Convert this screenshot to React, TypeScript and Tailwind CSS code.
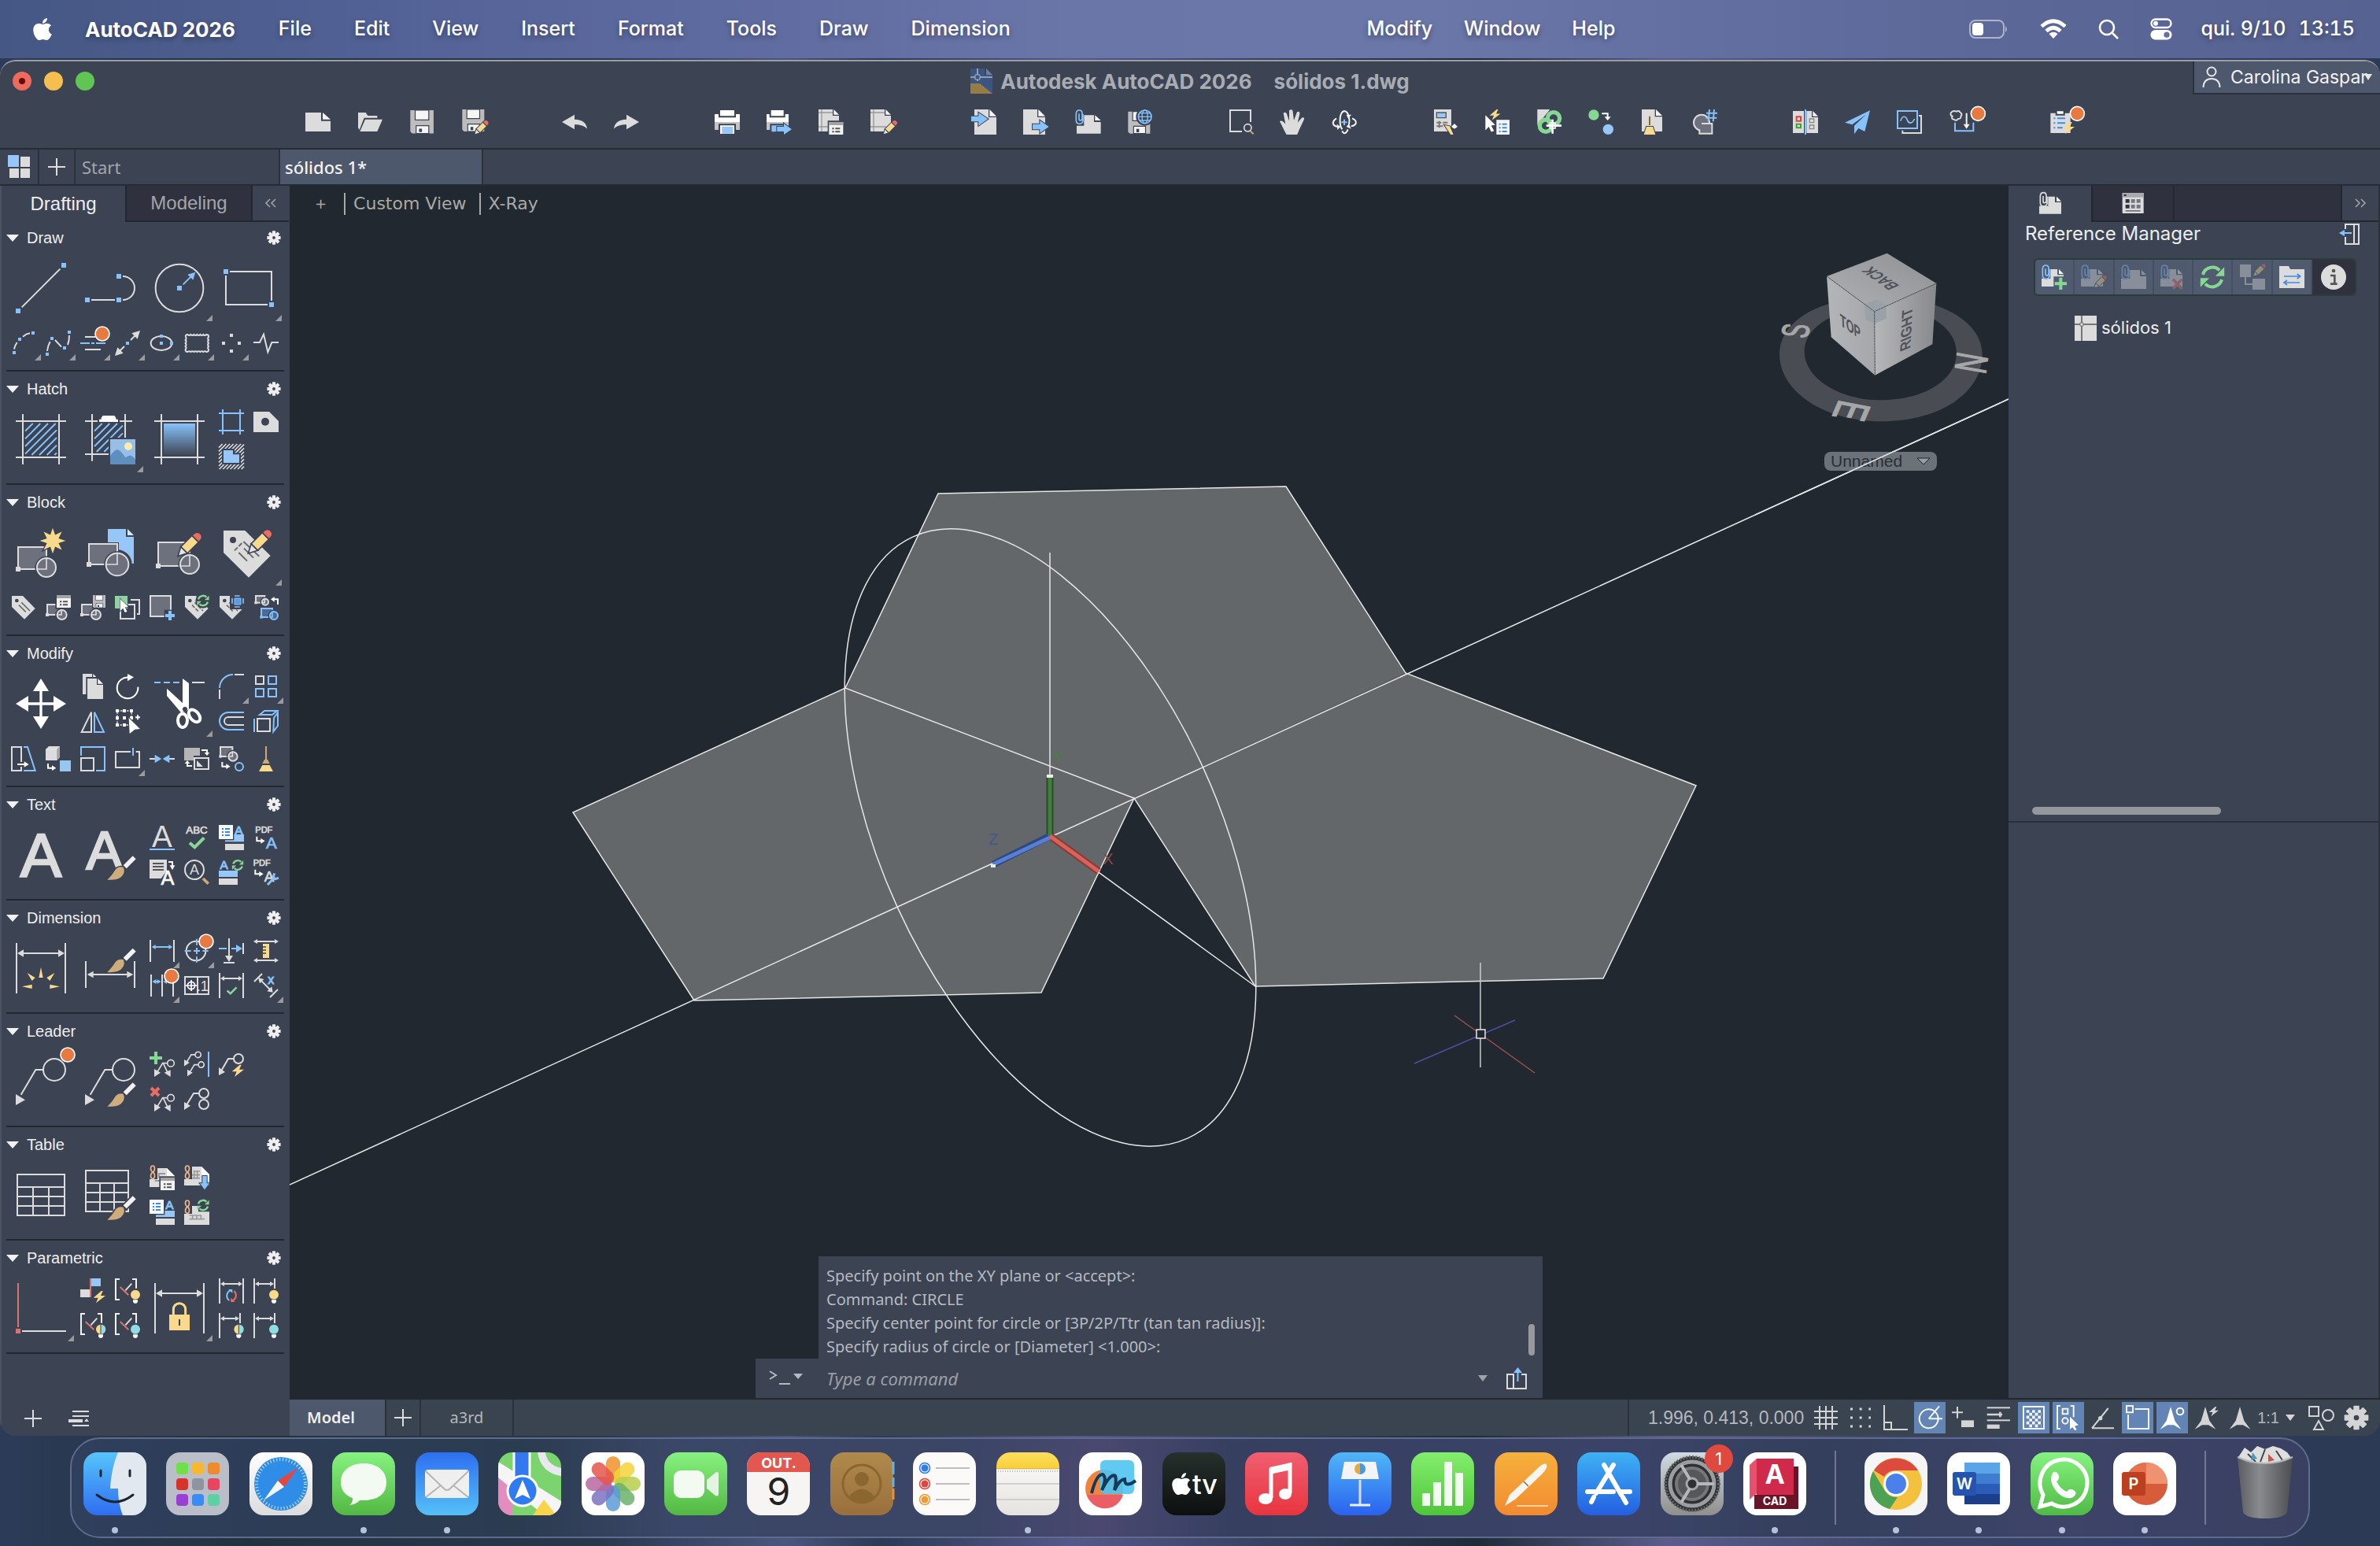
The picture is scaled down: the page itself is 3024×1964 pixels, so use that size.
import type { ReactNode } from "react";
import { FaApple } from "react-icons/fa";

const G = "#dcdcdc";
const B = "#86c2fb";
const BG = "#3c4352";
const Y = "#f9d98c";
const R = "#ea6c65";
const GR = "#86d694";
const F = "#6d717d";

/* ---------- shared drawing pieces (small icons use a 96 grid, large ones 192) ---------- */

const Small = ({ children }: { children?: ReactNode }) => (
  <svg viewBox="0 0 96 96" className="h-8 w-8 overflow-visible" fill="none" stroke={G} strokeWidth="6">
    {children}
  </svg>
);

const Large = ({ children }: { children?: ReactNode }) => (
  <svg viewBox="0 0 192 192" className="h-16 w-16 overflow-visible" fill="none" stroke={G} strokeWidth="6">
    {children}
  </svg>
);

const Sq = ({ x, y, s = 12, c = B }: { x: number; y: number; s?: number; c?: string }) => (
  <rect x={x - s / 2} y={y - s / 2} width={s} height={s} fill={c} stroke="none" />
);

const Dot = ({ x, y }: { x: number; y: number }) => (
  <circle cx={x} cy={y} r="27" fill="#e87a41" stroke="#fff" strokeWidth="5" />
);

const Fill = ({ d, c = G, o }: { d: string; c?: string; o?: boolean }) => (
  <path d={d} fill={c} stroke={o ? BG : "none"} strokeWidth="6" paintOrder="stroke" />
);

const T = ({ x, y, s, c = G, w = 0, children }: { x: number; y: number; s: number; c?: string; w?: number; children: string }) => (
  <text x={x} y={y} fontSize={s} textAnchor="middle" fill={c} stroke={c} strokeWidth={w} fontFamily="Liberation Sans, sans-serif">
    {children}
  </text>
);

const Hatching = ({ a, b, step, c = B }: { a: number; b: number; step: number; c?: string }) => {
  const lines = [];
  for (let s = 2 * a + step; s < 2 * b; s += step) {
    const x1 = Math.max(a, s - b);
    const x2 = Math.min(b, s - a);
    lines.push(<path key={s} d={`M${x1} ${s - x1}L${x2} ${s - x2}`} />);
  }
  return <g stroke={c}>{lines}</g>;
};

const DimArrow = ({ x1, x2, y, c = G, h = 9, l = 15 }: { x1: number; x2: number; y: number; c?: string; h?: number; l?: number }) => (
  <g>
    <path d={`M${x1 + l - 2} ${y}H${x2 - l + 2}`} stroke={c} />
    <path d={`M${x1} ${y}l${l} ${-h}v${2 * h}zM${x2} ${y}l${-l} ${-h}v${2 * h}z`} fill={c} stroke="none" />
  </g>
);

const Block = ({ x, y, w, h, cx, cy, r, s = 12, c = G, f = F }: { x: number; y: number; w: number; h: number; cx: number; cy: number; r: number; s?: number; c?: string; f?: string }) => (
  <g stroke={c}>
    <rect x={x} y={y} width={w} height={h} fill={f} />
    <circle cx={cx} cy={cy} r={r + 5} stroke={BG} strokeWidth="5" />
    <circle cx={cx} cy={cy} r={r} fill={f} />
    <path d={`M${x + w} ${Math.max(y, cy - r)}V${y + h}H${Math.max(x, cx - r)}`} strokeWidth="5" />
    <Sq x={x} y={y + h} s={s} c={c} />
  </g>
);

const Pencil = ({ x, y, k = 1 }: { x: number; y: number; k?: number }) => (
  <g transform={`translate(${x} ${y}) rotate(-45) scale(${k})`} stroke={BG} strokeWidth="5">
    <path d="M0 0L34 -18V18z" fill="#e4e4e4" />
    <path d="M34 -18H94V18H34z" fill={Y} />
    <path d="M94 -18H104A18 18 0 0 1 104 18H94z" fill={R} />
  </g>
);

const Brush = ({ y = 0 }: { y?: number }) => (
  <g transform={`translate(0 ${y})`}>
    <path d="M85 191Q104 172 112 158Q124 138 146 143Q156 162 138 180Q120 194 85 191z" fill="#cfac7c" stroke={BG} strokeWidth="10" paintOrder="stroke" />
    <path d="M150 144L187 107" stroke={BG} strokeWidth="28" />
    <path d="M152 142L188 106" stroke="#f2f2f2" strokeWidth="17" />
  </g>
);

const Sync = ({ x, y, r, w = 7, c = GR, c2 = GR }: { x: number; y: number; r: number; w?: number; c?: string; c2?: string }) => (
  <g transform={`translate(${x} ${y})`} strokeWidth={w}>
    {[c, c2].map((k, i) => (
      <g key={i} transform={i ? "rotate(180)" : undefined} stroke={k}>
        <path d={`M${-r * 0.95} ${-r * 0.25}A${r} ${r} 0 0 1 ${r * 0.72} ${-r * 0.68}`} />
        <path d={`M${r * 1.2} ${-r}V${-r * 0.1}H${r * 0.3}z`} fill={k} stroke="none" />
      </g>
    ))}
  </g>
);

const Bulb = ({ x = 78, c, c2 }: { x?: number; c: string; c2?: string }) => (
  <g stroke="none">
    <circle cx={x} cy="62" r="23" fill={BG} />
    <circle cx={x} cy="62" r="18" fill={c} />
    {c2 && <path d={`M${x + 1} 44A18 18 0 0 1 ${x + 1} 80z`} fill={c2} />}
    {c2 && <path d={`M${x} 44V80`} stroke={BG} strokeWidth="3" />}
    <path d={`M${x - 9} 82H${x + 9}V90L${x + 4} 95H${x - 4}L${x - 9} 90z`} fill="#fff" />
  </g>
);

const Clip = ({ c = B, x = 0, y = 0 }: { c?: string; x?: number; y?: number }) => (
  <path transform={`translate(${x} ${y})`} d="M30 18V44Q28 55 17 55Q4 54 4 42V16Q5 3 16 3Q26 3 27 14V36Q26 42 20 42Q15 42 15 36V16" stroke={c} strokeWidth="5" />
);

const Tag = ({ cut }: { cut?: boolean }) => (
  <g>
    <Fill d="M3 3H45L92 51L51 92L3 45z" />
    <circle cx="22" cy="21" r="7" fill={BG} stroke="none" />
    <path d="M40 28L72 60M30 38L56 64" stroke="#6b6b6b" strokeWidth="5" strokeDasharray={cut ? "14 5" : undefined} />
  </g>
);

const ListWin = ({ x, y }: { x: number; y: number }) => (
  <g transform={`translate(${x} ${y})`} stroke="none">
    <path d="M-5 -5H59V53H-5z" fill={BG} />
    <path d="M0 0H54V48H0z" fill="#f2f2f2" />
    <path d="M0 0H54V12H0z" fill="#a3a3a3" />
    <path d="M12 22h7v6h-7zM24 22h18v6h-18zM12 34h7v6h-7zM24 34h18v6h-18z" fill="#555" />
  </g>
);

const FieldList = () => (
  <g stroke="none">
    <path d="M-3 -3H58V58H-3z" fill={BG} />
    <path d="M0 0H54V54H0z" fill="#f8f8f8" />
    <path d="M12 15H18M24 15H42M12 27H18M24 27H42M12 39H18M24 39H42" stroke="#3d8ae0" />
  </g>
);

const Chain = () => (
  <path d="M12 3C2 3 2 22 12 26C22 32 22 52 12 52C2 52 2 34 12 28C22 22 22 3 12 3z" stroke="#eeb48a" strokeWidth="5" />
);

const Floppy = ({ x, y, k = 1 }: { x: number; y: number; k?: number }) => (
  <g transform={`translate(${x} ${y}) scale(${k})`} stroke="none">
    <path d="M-3 -3H51V51H-3z" fill={BG} />
    <path d="M0 0H48V48H4L0 44z" fill="#bdbdbd" />
    <path d="M10 0H38V20H10z" fill="#f5f5f5" stroke={BG} strokeWidth="2" />
    <path d="M12 32H38V48H12z" fill="#f5f5f5" stroke={BG} strokeWidth="2" />
    <path d="M18 38h6v7h-6z" fill={BG} />
  </g>
);

const Bolt = ({ x, y, k = 1, c = Y }: { x: number; y: number; k?: number; c?: string }) => (
  <path transform={`translate(${x} ${y}) scale(${k})`} d="M30 0L0 26H18L10 46L46 18H28L36 0z" fill={c} stroke="none" />
);

const Cursor = ({ x, y, k = 1 }: { x: number; y: number; k?: number }) => (
  <path transform={`translate(${x} ${y}) scale(${k})`} d="M0 0L34 34L20 36L30 54L20 58L12 40L0 52z" fill="#fff" stroke={BG} strokeWidth="4" paintOrder="stroke" />
);

const Elbow = ({ x, y }: { x: number; y: number }) => (
  <g transform={`translate(${x} ${y})`}>
    <path d="M3 0V17H20" stroke="#fff" />
    <path d="M18 7L34 17L18 27z" fill="#fff" stroke="none" />
  </g>
);

const Check = ({ x, y, k = 1 }: { x: number; y: number; k?: number }) => (
  <path transform={`translate(${x} ${y}) scale(${k})`} d="M3 24L22 41L58 5" stroke={GR} strokeWidth="12" />
);

const Page = ({ x, y, w, h, c = G, f = 20 }: { x: number; y: number; w: number; h: number; c?: string; f?: number }) => (
  <g transform={`translate(${x} ${y})`} stroke="none">
    <path d={`M0 0H${w - f - 4}V${f + 4}H${w}V${h}H0z`} fill={c} />
    <path d={`M${w - f} 0L${w} ${f}H${w - f}z`} fill="#f5f5f5" />
  </g>
);

const Leader = ({ x, y, k = 1, both }: { x: number; y: number; k?: number; both?: boolean }) => (
  <g transform={`translate(${x} ${y}) scale(${k})`} strokeWidth={5 / k}>
    <circle cx="63" cy="14" r="13" />
    <path d="M50 14H32L10 50" />
    <path d="M0 66V36L24 50z" fill={G} stroke="none" />
    {both && <path d="M34 14L52 52" />}
    {both && <path d="M62 66V40L38 50z" fill={G} stroke="none" />}
  </g>
);

const Bracket = () => (
  <g>
    <path d="M18 3H3V81H18M66 3H81V38" stroke="#f2f2f2" />
    <path d="M20 33L52 64" stroke="#d9736f" />
    <path d="M40 46L64 20" />
  </g>
);

const Star = () => {
  const pts = [];
  for (let i = 0; i < 16; i++) {
    const r = i % 2 ? 24 : 49;
    const a = (i * Math.PI) / 8;
    pts.push(`${141 + r * Math.sin(a)},${51 - r * Math.cos(a)}`);
  }
  return <polygon points={pts.join(" ")} fill={Y} stroke={BG} strokeWidth="8" paintOrder="stroke" />;
};

/* ---------- left palette ---------- */

type Tool = { n: string; i: ReactNode; big?: boolean; more?: boolean };

const t = (n: string, i: ReactNode, more = false): Tool => ({ n, i: <Small>{i}</Small>, more });
const L = (n: string, i: ReactNode, more = false): Tool => ({ n, i: <Large>{i}</Large>, big: true, more });
const blank: Tool = { n: "", i: null };

const sections: { title: string; rows: Tool[][][] }[] = [
  {
    title: "Draw",
    rows: [
      [
        [L("Line", <><path d="M23 169L169 23" /><Sq x={9} y={183} s={18} /><Sq x={183} y={9} s={18} /></>)],
        [L("Polyline", <><path d="M24 141H114M144 51a45 45 0 0 1 0 90" /><Sq x={9} y={141} s={18} /><Sq x={129} y={141} s={18} /><Sq x={129} y={51} s={18} /></>)],
        [L("Circle", <><circle cx="96" cy="96" r="91" /><Sq x={96} y={96} s={18} /><path d="M110 82L140 52" stroke={B} /><Fill d="M157 35L148 65L127 44z" c={B} /></>, true)],
        [L("Rectangle", <><path d="M24 33H183V144M168 159H9V48" /><Sq x={9} y={33} s={18} /><Sq x={183} y={159} s={18} /></>, true)],
      ],
      [
        [
          t("Arc", <><path d="M12 71Q14 58 23 45M45 23Q58 12 72 10" /><Sq x={12} y={84} /><Sq x={33} y={33} /><Sq x={84} y={9} /></>, true),
          t("Spline", <><path d="M6 78Q8 58 17 42M36 36L60 62M84 54Q90 40 90 18" /><Sq x={6} y={90} /><Sq x={24} y={30} /><Sq x={72} y={66} /><Sq x={90} y={6} /></>, true),
          t("Multiline", <><path d="M18 24H58M18 72H78" /><path d="M0 48H36M42 48H54M60 48H96" stroke={B} /><Dot x={84} y={12} /></>, true),
          t("Construction line", <><path d="M36 60L16 80M60 36L80 16" /><Fill d="M96 0L86 32L64 10zM0 96L10 64L32 86z" /><Sq x={48} y={48} /></>, true),
          t("Ellipse", <><ellipse cx="45" cy="48" rx="40" ry="27" /><Sq x={45} y={21} /><Sq x={45} y={48} /><Sq x={84} y={48} /></>, true),
          t("Revision cloud", <path d="M6 24Q4 15 13 15Q19 21 25 15Q31 21 37 15Q43 21 49 15Q55 21 61 15Q67 21 73 15Q79 21 85 15Q94 15 93 24Q88 30 93 36Q88 42 93 48Q88 54 93 60Q88 66 93 72Q94 81 85 81Q79 76 73 81Q67 76 61 81Q55 76 49 81Q43 76 37 81Q31 76 25 81Q19 76 13 81Q4 81 5 72Q10 66 5 60Q10 54 5 48Q10 42 5 36Q10 30 6 24z" />, true),
          t("Points", <><Sq x={48} y={18} c={G} /><Sq x={18} y={48} c={G} /><Sq x={78} y={48} c={G} /><Sq x={48} y={78} c={G} /></>, true),
          t("Break line", <path d="M0 45H24L39 14L55 82L70 45H96" />),
        ],
      ],
    ],
  },
  {
    title: "Hatch",
    rows: [
      [
        [L("Hatch", <><path d="M27 0V192M165 0V192M0 27H192M0 165H192" /><Hatching a={36} b={156} step={29} /></>)],
        [
          L("Image hatch", <>
            <path d="M27 0V179M153 0V90M0 27H48M132 27H180M0 153H90" />
            <Hatching a={36} b={144} step={29} />
            <path d="M90 90H198V198H90z" fill={BG} stroke="none" />
            <path d="M54 20H62V14L68 6H112L118 14V20H126V30H54z" fill="#fff" stroke="none" />
            <path d="M96 96H192V192H96z" fill="#97bfe6" stroke="none" />
            <circle cx="165" cy="123" r="15" fill="#fcecb0" stroke="none" />
            <path d="M96 160Q112 136 124 136Q138 140 154 166Q168 156 176 158Q186 162 192 174V192H96z" fill="#5f8fbf" stroke="none" />
          </>, true),
        ],
        [
          L("Gradient", <>
            <defs><linearGradient id="hg" x2="0" y2="1"><stop stopColor="#86c2fb" /><stop offset="1" stopColor="#404856" /></linearGradient></defs>
            <path d="M27 0V192M165 0V192M0 27H192M0 165H192" /><path d="M36 36H156V156H36z" fill="url(#hg)" stroke="none" />
          </>),
        ],
        [
          t("Boundary", <path d="M15 0V96M81 0V96M0 15H96M0 81H96" stroke={B} />),
          t("Wipeout", <><Fill d="M0 9H60L96 45V87H0z" /><circle cx="45" cy="47" r="15" fill={BG} stroke="none" /></>),
          t("Region", <><g strokeWidth="5"><Hatching a={0} b={96} step={14} c={G} /></g><Fill d="M12 18H60V34H84V78H12z" c={BG} /><Fill d="M18 24H54V40H78V72H18z" c="#97c6f8" /></>),
        ],
      ],
    ],
  },
  {
    title: "Block",
    rows: [
      [
        [L("Create block", <><Block x={9} y={75} w={108} h={84} cx={117} cy={153} r={36} s={18} /><Star /></>)],
        [L("Insert block", <><path d="M87 6H156V36H186V138H87z" fill="#97c6f8" stroke="none" /><path d="M162 6L186 30H162z" fill="#d5e8fc" stroke="none" /><circle cx="123" cy="141" r="56" fill={BG} stroke="none" /><path d="M10 57H129V141H10z" fill={BG} stroke="none" /><Block x={15} y={63} w={108} h={78} cx={123} cy={141} r={43} s={18} /></>)],
        [L("Edit block", <><Block x={15} y={57} w={120} h={90} cx={135} cy={141} r={36} s={18} /><Pencil x={90} y={110} /></>)],
        [L("Edit attribute", <><Fill d="M0 12H82L179 108L96 191L0 96z" /><circle cx="36" cy="48" r="12" fill={BG} stroke="none" /><path d="M76 54L136 110M58 72L70 60M42 88L54 76M58 96L90 128M78 80L114 116" stroke="#6b6b6b" /><Pencil x={94} y={99} /></>, true)],
      ],
      [
        [
          t("Attribute", <Tag />),
          t("Block list", <><Block x={6} y={36} w={54} h={39} cx={62} cy={75} r={18} /><ListWin x={42} y={0} /></>),
          t("Save block", <><Block x={6} y={36} w={54} h={39} cx={60} cy={75} r={18} /><Floppy x={48} y={0} /></>),
          t("Base point", <><path d="M60 18H93V72H84" /><path d="M21 45V90H75V36H50" /><path d="M0 3H48V51H0z" fill="#8fd4a0" stroke="none" /><Cursor x={20} y={14} k={0.9} /></>),
          t("Add block", <><rect x="3" y="3" width="78" height="78" fill={F} /><path d="M56 56H96V96H56z" fill={BG} stroke="none" /><path d="M78 60V96M60 78H96" stroke={B} strokeWidth="12" /></>),
          t("Sync attributes", <><Tag cut /><circle cx="72" cy="21" r="29" fill={BG} stroke="none" /><Sync x={72} y={21} r={19} /></>),
          t("Select attributes", <><Tag cut /><path d="M42 0H96V54H42z" fill={BG} stroke="none" /><path d="M60 12H84V36H60z" fill="#5c9be0" stroke={B} strokeWidth="3" /><path d="M60 3H84M60 45H84M51 12V36M93 12V36" stroke={B} strokeDasharray="20 4" strokeWidth="5" /></>),
          t("Replace block", <><Block x={9} y={3} w={34} h={26} cx={45} cy={26} r={12} s={10} /><path d="M93 36V16H76" stroke="#fff" /><Fill d="M66 16L80 6V26z" c="#fff" /><Block x={30} y={51} w={42} h={33} cx={78} cy={78} r={15} s={10} c={B} f="#4a6c94" /></>),
        ],
      ],
    ],
  },
  {
    title: "Modify",
    rows: [
      [
        [L("Move", <><path d="M96 40V152M40 96H152" stroke="#fff" strokeWidth="10" /><Fill d="M96 0L126 48H66zM96 192L66 144H126zM0 96L48 66V126zM192 96L144 126V66z" c="#fff" /></>)],
        [
          t("Copy", <><Page x={9} y={0} w={54} h={78} f={14} /><path d="M22 12H96V96H22z" fill={BG} stroke="none" /><Page x={27} y={18} w={60} h={78} /></>),
          t("Rotate", <><path d="M54 14A40 40 0 1 0 88 50" stroke="#fff" /><Fill d="M48 0L72 13L48 28z" c="#fff" /></>),
          t("Mirror", <><path d="M42 14V90H5z" /><path d="M54 14V90H90z" stroke={B} /></>),
          t("Select", <><path d="M9 9H63V63H9z" strokeWidth="4" strokeDasharray="8 4" />{[9, 36, 63].map((x) => [9, 36, 63].map((y) => <Sq key={`${x}${y}`} x={x} y={y} s={12} c="#fff" />))}<path d="M87 25V43M78 34H96" stroke="#fff" /><Fill d="M53 36L96 78L76 80L56 96z" c="#fff" o /></>),
        ],
        [
          L("Trim", <>
            <path d="M0 15H24M36 15H60M72 15H96" stroke={B} /><path d="M144 15H192" />
            <Fill d="M108 0L132 18V118L112 128L108 112z" c="#fff" /><Fill d="M48 38V66L104 132L128 112z" c="#fff" />
            <circle cx="117" cy="117" r="9" fill={BG} stroke="none" />
            <ellipse cx="108" cy="160" rx="18" ry="26" stroke="#fff" strokeWidth="12" /><ellipse cx="153" cy="142" rx="17" ry="27" stroke="#fff" strokeWidth="12" transform="rotate(-40 153 142)" />
          </>, true),
        ],
        [
          t("Fillet", <><path d="M3 54A51 51 0 0 1 54 3" stroke={B} /><path d="M60 3H96M3 60V96" /></>, true),
          t("Array", <><path d="M9 9H39V39H9z" /><path d="M57 9H87V39H57zM9 57H39V87H9zM57 57H87V87H57z" stroke={B} /></>, true),
          t("Offset", <><path d="M96 15H36A33 33 0 0 0 36 81H96" stroke={B} /><path d="M96 33H36A15 15 0 0 0 36 63H96" /></>),
          t("Extrude", <><path d="M15 39H63V87H15z" /><path d="M3 39V90M24 24L42 9H90L72 24zM78 36L93 16V66L76 88z" stroke={B} /></>),
        ],
      ],
      [
        [
          t("Stretch", <><path d="M39 60V3H3V93H39V78" /><path d="M48 3H63L92 93H48" stroke={B} /><path d="M24 69H54" stroke="#fff" /><Fill d="M50 58L68 69L50 80z" c="#fff" /></>),
          t("3D scale", <><Fill d="M0 12L12 0H54V42L42 54H0z" /><path d="M0 12H42V54M42 12L54 0" stroke="#f5f5f5" strokeWidth="2" /><path d="M42 12V54L54 42V0z" fill="#a8a8a8" stroke="none" /><Elbow x={6} y={66} /><path d="M54 54H96V96H54z" fill="#97c6ee" stroke="none" /></>),
          t("Scale", <><path d="M3 45H51V93H3z" /><path d="M3 36V3H93V93H60" stroke={B} /></>),
          t("Break", <><path d="M60 21H3V81H93V21H80" /><path d="M69 6V36" stroke={B} /></>, true),
          t("Join", <><path d="M0 48H24M72 48H96" /><Fill d="M20 32L46 48L20 64zM76 32L50 48L76 64z" c={B} /></>),
          t("Draw order", <><path d="M0 6H60V36H36V54H0z" fill="#b5b5b5" stroke="none" /><path d="M39 45H93V87H39z" /><Fill d="M48 54L72 78H48z" /><path d="M66 15H87V26" stroke="#fff" /><Fill d="M77 24H97L87 36zM2 66H22L12 54z" c="#fff" /><path d="M12 64V75H30" stroke="#fff" /></>),
          t("Convert", <><Block x={6} y={3} w={46} h={36} cx={54} cy={39} r={17} s={10} /><Elbow x={10} y={60} /><circle cx="78" cy="78" r="15" stroke={B} /></>),
          t("Purge", <><path d="M48 0V54" stroke="#cda876" /><Fill d="M42 50H54L62 66H34z" c="#cda876" /><Fill d="M34 72H62L75 96H21z" c={Y} /></>),
        ],
      ],
    ],
  },
  {
    title: "Text",
    rows: [
      [
        [L("Text", <T x={96} y={181} s={236} w={7}>A</T>)],
        [L("Text style", <><T x={74} y={150} s={208} w={7}>A</T><Brush /></>)],
        [
          t("Single line", <><T x={48} y={84} s={116}>A</T><path d="M0 93H96" stroke={B} /></>),
          t("Spell check", <><T x={48} y={34} s={40} w={2}>ABC</T><Check x={18} y={44} /></>),
          t("Field", <><path d="M24 36H96V64H24z" fill="#97c6f8" stroke="none" /><T x={76} y={36} s={46} c={B} w={3}>A</T><path d="M24 72H96V96H24z" fill={G} stroke="none" /><FieldList /></>),
          t("PDF text", <><T x={40} y={30} s={33} w={2}>PDF</T><Elbow x={10} y={44} /><T x={69} y={90} s={62} c={B} w={2}>A</T></>),
          t("Align text", <><Fill d="M0 0H66V42L44 72H0z" /><path d="M12 15H54M12 27H54M12 39H54" stroke="#555" /><path d="M72 9H87V24" stroke="#fff" /><Fill d="M77 22H97L87 40z" c="#fff" /><T x={69} y={95} s={76} c="#fff" w={2}>A</T></>),
          t("Find", <><circle cx="39" cy="39" r="36" /><T x={39} y={58} s={54}>A</T><path d="M72 72L92 92" stroke="#cda876" strokeWidth="11" /></>),
          t("Update field", <><T x={20} y={36} s={46} c={B} w={3}>A</T><path d="M0 42H72V66H0z" fill="#97c6f8" stroke="none" /><path d="M0 72H72V96H0z" fill={G} stroke="none" /><Sync x={72} y={21} r={18} /></>),
          t("PDF settings", <><T x={32} y={24} s={33} w={2}>PDF</T><Elbow x={4} y={38} /><T x={60} y={84} s={56} w={2}>A</T><path d="M54 96L80 68M80 52L76 66L82 74L96 70" stroke={B} strokeWidth="9" /></>),
        ],
      ],
    ],
  },
  {
    title: "Dimension",
    rows: [
      [
        [L("Dimension", <><path d="M3 0V192M189 0V192" /><DimArrow x1={6} x2={186} y={39} h={14} l={24} /><Fill d="M96 92L104 132H88zM44 114L74 132L62 144zM148 114L118 132L130 144zM24 166L62 158V174zM168 166L130 158V174z" c={Y} /></>)],
        [L("Dimension style", <><path d="M3 69V171M189 69V171" /><DimArrow x1={8} x2={184} y={120} h={13} l={24} /><Brush y={-80} /></>)],
        [
          t("Linear", <><path d="M3 6V90M93 6V90" /><DimArrow x1={8} x2={88} y={33} c={B} /></>, true),
          t("Center mark", <><circle cx="45" cy="48" r="37" /><path d="M48 2V26M48 36V60M48 70V92M2 48H26M36 48H60M70 48H92" stroke={B} /><Dot x={84} y={12} /></>, true),
          t("Ordinate", <><path d="M39 0V70M18 93H60M93 18V60" /><Fill d="M24 66H54L39 90z" /><path d="M0 39H30M48 39H66" stroke={B} /><Fill d="M66 24L90 39L66 54z" c={B} /></>),
          t("Measure", <><DimArrow x1={0} x2={96} y={12} /><DimArrow x1={0} x2={96} y={84} /><path d="M36 21H60V75H36z" fill={Y} stroke="none" /><path d="M36 33H48M36 45H48M36 57H48" stroke={BG} strokeWidth="4" /></>),
          t("Continue", <><path d="M6 6V90M48 6V90M90 6V90" /><DimArrow x1={10} x2={44} y={33} c={B} /><Fill d="M52 33L66 24V42z" c={B} /><Dot x={84} y={12} /></>, true),
          t("Tolerance", <><path d="M3 15H93V81H3z" /><path d="M51 15V81" /><circle cx="27" cy="48" r="14" stroke="#fff" strokeWidth="5" /><path d="M27 27V69M6 48H48" stroke="#fff" strokeWidth="5" /><T x={70} y={68} s={54}>.1</T></>),
          t("Inspect", <><path d="M3 0V96M93 0V96" /><DimArrow x1={6} x2={90} y={21} /><Check x={30} y={52} k={0.65} /></>),
          t("Oblique", <><path d="M3 33L33 3M63 93L93 63M26 26L66 66" /><Fill d="M18 18L40 24L24 40zM74 74L52 70L70 52z" /><T x={67} y={42} s={48} c={B} w={3}>x</T></>, true),
        ],
      ],
    ],
  },
  {
    title: "Leader",
    rows: [
      [
        [L("Multileader", <><circle cx="147" cy="51" r="42" /><path d="M105 51H76L20 146" /><Fill d="M0 144L36 166L0 186z" /><Dot x={198} y={-6} /></>)],
        [L("Leader style", <><circle cx="147" cy="51" r="42" /><path d="M105 51H76L20 146" /><Fill d="M0 144L36 166L0 186z" /><Brush /></>)],
        [
          t("Add leader", <><path d="M24 0V48M0 24H48" stroke={GR} strokeWidth="12" /><Leader x={18} y={30} both /></>),
          t("Align leaders", <><Leader x={0} y={0} k={0.84} /><Leader x={12} y={38} k={0.84} /><path d="M93 0V96" stroke={B} /></>),
          t("Attach leader", <><circle cx="75" cy="27" r="18" /><path d="M57 27H36L10 72" /><Fill d="M0 60L24 78L0 90z" /><Bolt x={50} y={50} /></>),
          blank,
          t("Remove leader", <><path d="M6 6L36 36M36 6L6 36" stroke={R} strokeWidth="12" /><Leader x={18} y={30} both /></>),
          t("Collect leaders", <><circle cx="75" cy="27" r="18" /><circle cx="75" cy="69" r="18" /><path d="M57 27H36L10 70" /><Fill d="M0 60L24 74L0 90z" /></>),
        ],
      ],
    ],
  },
  {
    title: "Table",
    rows: [
      [
        [L("Table", <path d="M6 18H186V174H6zM6 66H186M6 102H186M6 138H186M66 66V174M126 66V174" />)],
        [L("Table style", <><path d="M3 3H165V159H3zM3 51H165M3 87H165M3 123H165M57 51V159M111 51V159" /><Brush /></>)],
        [
          t("Link data", <><Fill d="M30 12H66L96 42V84H0V54H30z" /><path d="M36 33H60M36 30V48M20 60H40" stroke="#999" /><Fill d="M66 12L96 42H66z" c="#fff" /><Chain /><ListWin x={42} y={48} /></>),
          t("Download link", <><Fill d="M30 6H66L96 36V78H0V54H30z" /><path d="M36 24H60M30 38H60M30 50H60M38 20V54M50 20V54" stroke="#999" strokeWidth="5" /><Fill d="M66 6L96 36V60L66 40z" c="#fff" /><Chain /><Fill d="M70 42H86V70H96L78 94L60 70H70z" c={B} o /></>),
          blank,
          blank,
          t("Extract", <><T x={76} y={36} s={46} c={B} w={3}>A</T><path d="M24 42H96V66H24z" fill="#97c6f8" stroke="none" /><path d="M24 72H96V96H24z" fill={G} stroke="none" /><FieldList /></>),
          t("Update link", <><Fill d="M0 54H30V24H54V46H96V96H0z" /><path d="M20 60H66M20 74H78M32 60V74M48 60V74M64 60V74" stroke="#999" strokeWidth="5" /><Chain /><Sync x={72} y={21} r={19} /></>),
        ],
      ],
    ],
  },
  {
    title: "Parametric",
    rows: [
      [
        [L("Constraint", <><path d="M9 0V168" stroke="#d9736f" /><Sq x={9} y={183} s={18} c="#d9736f" /><path d="M24 183H192" /></>, true)],
        [
          t("Auto constrain", <><path d="M0 42H36V72H0z" fill={G} stroke="none" /><path d="M42 0H78V30H42z" fill="#97c6f8" stroke="none" /><path d="M39 0V72" stroke="#d9736f" /><Bolt x={50} y={48} /></>),
          t("Show constraint", <><Bracket /><Bulb c={Y} /></>),
          t("Toggle constraints", <><Bracket /><Bulb c={Y} c2="#8fdde3" /></>),
          t("Hide constraint", <><Bracket /><Bulb c="#8fdde3" /></>),
        ],
        [L("Dimensional", <><path d="M3 0V192M189 0V192" /><DimArrow x1={6} x2={186} y={39} h={14} l={24} /><Fill d="M57 120H135V180H57z" c={Y} /><path d="M73 122V100A22 22 0 0 1 119 100V122" stroke={Y} strokeWidth="9" /><path d="M96 138V162" stroke={BG} /></>, true)],
        [
          t("Convert dimension", <><path d="M3 0V96M93 0V96" /><DimArrow x1={6} x2={90} y={21} /><path d="M44 46A22 22 0 0 0 40 84" stroke={B} /><path d="M54 84A22 22 0 0 0 58 48" stroke={R} /><Fill d="M36 42H52V56z" c={B} /><Fill d="M62 90H46V74z" c={R} /></>),
          t("Show dimension", <><path d="M3 0V96M81 0V40" /><DimArrow x1={6} x2={78} y={21} /><Bulb c={Y} /></>),
          t("Toggle dimensions", <><path d="M3 0V96M81 0V40" /><DimArrow x1={6} x2={78} y={21} /><Bulb x={76} c={Y} c2="#8fdde3" /></>),
          t("Hide dimension", <><path d="M3 0V96M81 0V40" /><DimArrow x1={6} x2={78} y={21} /><Bulb c="#8fdde3" /></>),
        ],
      ],
    ],
  },
];

const ToolButton = ({ tool }: { tool: Tool }) =>
  tool.n ? (
    <button aria-label={tool.n} className={`relative flex items-center justify-center ${tool.big ? "h-[88px] w-[88px]" : "h-11 w-11"}`}>
      {tool.i}
      {tool.more && <span className={`absolute h-2 w-2 bg-[#9b9b9b] [clip-path:polygon(100%_0,100%_100%,0_100%)] ${tool.big ? "bottom-0.5 right-0.5" : "bottom-0 right-0"}`} />}
    </button>
  ) : (
    <span className="h-11 w-11" />
  );

const Gear = ({ className }: { className: string }) => (
  <svg viewBox="-10 -10 20 20" className={className}>
    {[0, 45, 90, 135].map((a) => (
      <rect key={a} x="-2.3" y="-9.6" width="4.6" height="19.2" rx="0.6" transform={`rotate(${a})`} fill="currentColor" />
    ))}
    <circle r="4.6" fill="none" stroke="currentColor" strokeWidth="4.4" />
    <circle r="2.1" fill={BG} />
  </svg>
);

const Palette = () => (
  <aside className="flex w-[368px] shrink-0 flex-col border-l-2 border-[#4b5261] bg-[#3c4352] pr-px font-['Liberation_Sans',sans-serif] text-[#eeeeee]">
    <div className="flex h-[46px] text-2xl">
      <button className="w-[157px]">Drafting</button>
      <button className="flex-1 border-x-2 border-b-2 border-[#222730] bg-[#2f323e] text-[#a3a5a9]">Modeling</button>
      <button aria-label="Collapse" className="flex w-[46px] items-center justify-center border-b-2 border-[#222730]">
        <svg viewBox="0 0 14 12" className="h-3 w-3.5" fill="none" stroke="#a0a2a6" strokeWidth="1.6"><path d="M6 1L1 6L6 11M13 1L8 6L13 11" /></svg>
      </button>
    </div>
    <div className="-mt-0.5 px-1.5">
      {sections.map((s) => (
        <section key={s.title} className="border-b-2 border-[#222730] pb-3">
          <header className="flex h-[42px] items-center pt-0.5 text-xl">
            <svg viewBox="0 0 16 9" className="mr-2.5 h-[9px] w-4"><path d="M0 0H16L8 9z" fill="#f2f2f2" /></svg>
            <h2 className="flex-1">{s.title}</h2>
            <Gear className="mr-1 h-[18px] w-[18px]" />
          </header>
          <div className="flex flex-col gap-1">
            {s.rows.map((row, i) => (
              <div key={i} className="flex">
                {row.map((g, j) => (
                  <div key={j} className={g.length >= 6 ? (i === 0 ? "grid grid-cols-4" : "flex") : g.length > 1 ? "grid grid-cols-2" : "flex"}>
                    {g.map((tool, k) => <ToolButton key={k} tool={tool} />)}
                  </div>
                ))}
              </div>
            ))}
          </div>
        </section>
      ))}
    </div>
    <footer className="mt-auto flex items-center gap-8 pb-2.5 pl-7">
      <button aria-label="Add" className="h-6 w-6"><svg viewBox="0 0 24 24" stroke={G} strokeWidth="2"><path d="M12 1V23M1 12H23" /></svg></button>
      <button aria-label="Sets" className="h-6 w-7"><svg viewBox="0 0 28 24" stroke={G} strokeWidth="2"><path d="M6 3H27M6 9H27M6 21H27" /><path d="M1 15H19" strokeWidth="4" /><path d="M21 16L24 12L27 16z" fill={G} stroke="none" /></svg></button>
    </footer>
  </aside>
);

/* ---------- menu bar ---------- */

const MenuBar = () => (
  <nav className="flex h-[74px] items-center bg-[linear-gradient(90deg,#455784_0%,#56649a_20%,#6a75a8_45%,#6b76a9_60%,#5b6797_85%,#566291_100%)] pl-10 text-[25px] font-medium text-white [text-shadow:0_3px_6px_rgba(0,0,0,0.35)]">
    <FaApple className="h-8 w-7" />
    <a href="#app" className="ml-10 text-[26px] font-bold">AutoCAD 2026</a>
    <div className="ml-[55px] flex gap-[54px]">
      {["File", "Edit", "View", "Insert", "Format", "Tools", "Draw", "Dimension"].map((m) => <a key={m} href="#menu">{m}</a>)}
    </div>
    <div className="ml-auto mr-[450px] flex gap-10">
      {["Modify", "Window", "Help"].map((m) => <a key={m} href="#menu">{m}</a>)}
    </div>
    <div className="flex items-center gap-10 pr-8">
      <svg viewBox="0 0 50 24" className="h-6 w-[50px]"><rect x="1" y="1" width="43" height="22" rx="7" fill="none" stroke="#fff" strokeOpacity=".5" strokeWidth="2" /><rect x="4" y="4" width="14" height="16" rx="4" fill="#fff" /><path d="M46 8Q50 12 46 16z" fill="#fff" fillOpacity=".5" /></svg>
      <svg viewBox="0 0 34 26" className="h-[26px] w-[34px]" fill="none" stroke="#fff" strokeWidth="4.6"><path d="M2 9.5Q17 -4 32 9.5M8 15.5Q17 7 26 15.5" /><path d="M17 25L11.5 19Q17 14.5 22.5 19z" fill="#fff" stroke="none" /></svg>
      <svg viewBox="0 0 26 26" className="h-[26px] w-[26px]" fill="none" stroke="#fff" strokeWidth="2.6"><circle cx="11" cy="11" r="9" /><path d="M18 18L25 25" /></svg>
      <svg viewBox="0 0 28 28" className="h-7 w-7"><rect x="1.5" y="1.5" width="25" height="10.5" rx="5.2" fill="none" stroke="#fff" strokeWidth="2.4" /><circle cx="7" cy="6.7" r="3" fill="#fff" /><rect x="0.5" y="15" width="27" height="12.500" rx="6.2" fill="#fff" /><circle cx="21" cy="21.2" r="3.6" fill="#6270a0" /></svg>
      <div className="-ml-1 flex gap-4 tabular-nums"><span>qui. 9/10</span><span>13:15</span></div>
    </div>
  </nav>
);

/* ---------- toolbar ---------- */

const toolbar: Tool[][] = [
  [
    t("New", <><Fill d="M0 12H60V44H96V84H0z" /><Fill d="M66 12L96 38H66z" c="#f5f5f5" /></>),
    t("Open", <><Fill d="M3 12H32L40 24H76V32H26L8 78L3 70z" /><Fill d="M30 38H96L76 84H10z" /></>),
    t("Save", <Floppy x={4} y={3} k={1.85} />),
    t("Save as", <><Floppy x={4} y={0} k={1.75} /><Pencil x={50} y={96} k={0.6} /></>),
  ],
  [
    t("Undo", <Fill d="M0 48L48 20V38C80 38 94 54 96 74C84 62 70 58 48 58V76z" />),
    t("Redo", <Fill d="M96 48L48 20V38C16 38 2 54 0 74C12 62 26 58 48 58V76z" />),
  ],
  [
    t("Print", <><path d="M0 18H96V48H0z" fill="#fff" stroke="none" /><path d="M0 48H96V78H0z" fill="#c4c4c4" stroke="none" /><path d="M18 0H78V28H18z" fill="#fff" stroke={BG} /><path d="M18 58H78V96H18z" fill="#fff" stroke={BG} /><path d="M28 66H70V92H28z" fill="#97c6f8" stroke="none" /></>),
    t("Print preview", <><path d="M0 18H84V48H0z" fill="#fff" stroke="none" /><path d="M0 48H84V78H0z" fill="#c4c4c4" stroke="none" /><path d="M14 0H68V28H14z" fill="#fff" stroke={BG} /><path d="M16 58H66V88H16z" fill={B} stroke={BG} /><Fill d="M40 66H66V54L96 76L66 96V84H40z" c={B} o /></>),
    t("Page setup", <><Page x={0} y={0} w={78} h={84} /><path d="M12 0V84M0 12H54M0 66H40" stroke="#999" strokeWidth="4" /><ListWin x={40} y={48} /></>),
    t("Plot", <><Page x={0} y={0} w={78} h={84} /><path d="M12 0V84M0 12H54M0 66H60" stroke="#999" strokeWidth="4" /><Pencil x={48} y={96} k={0.6} /></>),
  ],
  [
    t("Import", <><Page x={12} y={0} w={84} h={96} f={26} /><Fill d="M0 26H28V12L64 36L28 62V46H0z" c={B} o /></>),
    t("Export", <><Page x={0} y={0} w={84} h={96} f={26} /><Fill d="M36 56H64V42L98 66L64 90V76H36z" c={B} o /></>),
    t("Attach", <><Fill d="M6 62H34V22H72V48H98V92H6z" /><Fill d="M76 22L98 42H76z" c="#f5f5f5" /><Clip /></>),
    t("Save to web", <><Floppy x={4} y={8} k={1.75} /><circle cx="68" cy="28" r="34" fill={BG} stroke="none" /><circle cx="68" cy="28" r="25" stroke={B} strokeWidth="5" /><ellipse cx="68" cy="28" rx="11" ry="25" stroke={B} strokeWidth="4" /><path d="M43 28H93M48 14H88M48 42H88" stroke={B} strokeWidth="4" /></>),
  ],
  [
    t("Zoom window", <><path d="M87 48V3H9V84H54" /><circle cx="76" cy="70" r="14" strokeWidth="5" /><path d="M86 82L98 94" stroke="#cda876" /></>),
    t("Pan", <Fill d="M26 96C16 80 8 60 0 46C6 40 14 46 22 56L14 14C20 8 26 12 28 20L36 44L36 4C42 -2 50 0 50 8L54 42L66 10C72 6 78 10 76 18L68 50L84 32C92 28 96 34 92 40L74 78Q70 90 66 96z" />),
    t("Orbit", <><path d="M40 76C28 60 28 10 48 6C66 8 70 40 66 58M18 34C-4 50 6 64 24 66M74 64C98 60 98 42 78 34M40 82C46 96 56 92 62 76" stroke="#f2f2f2" /><path d="M48 38V60M37 49H59" stroke={B} /><Fill d="M56 20H76L62 34zM20 56L34 66L22 78zM66 54L56 66L74 74z" c="#f2f2f2" /></>),
  ],
  [
    t("Properties", <><path d="M6 0H72V84H6z" fill={G} stroke="none" /><path d="M16 12H52V32H16z" fill="#97c6f8" stroke="#555" strokeWidth="4" /><path d="M16 50H34M40 50H58M16 64H40M26 44V70" stroke="#777" /><Fill d="M84 54L96 66L84 74L72 66z" c="#f5f5f5" o /><Fill d="M46 60L66 64L80 96H70z" c={Y} o /></>),
    t("Quick select", <><Bolt x={20} y={0} k={0.9} /><path d="M46 40H96V96H46z" fill="#f5f5f5" stroke="none" /><path d="M56 56H62M68 56H86M56 70H62M68 70H86M56 84H62M68 84H86" stroke="#3d8ae0" /><Cursor x={4} y={22} k={1.1} /></>),
    t("Geolocation", <><Fill d="M4 0H52L4 60z" /><circle cx="66" cy="34" r="23" stroke={GR} strokeWidth="16" /><circle cx="36" cy="62" r="23" stroke={GR} strokeWidth="16" /><path d="M62 38V92M38 62H96" stroke="#fff" strokeWidth="8" /><path d="M52 52H72V72H52z" stroke="#fff" strokeWidth="5" /></>),
    t("Swap", <><circle cx="21" cy="21" r="20" fill={GR} stroke="none" /><circle cx="76" cy="76" r="20" fill="#97c6f8" stroke="none" /><path d="M52 16H74V32" stroke="#fff" /><Fill d="M62 28H86L74 42z" c="#fff" /></>),
    t("Purge", <><Page x={6} y={0} w={78} h={84} f={24} /><path d="M36 26V60" stroke="#8a6534" /><Fill d="M24 66H48L58 96H14z" c={Y} o /></>),
    t("Count", <><circle cx="36" cy="50" r="30" fill={F} /><path d="M36 54H76V92H28V76" fill={F} /><path d="M66 0L62 46M84 0L80 46M54 14H96M52 32H94" stroke={B} /></>),
  ],
  [
    t("Compare", <><path d="M0 6H42V90H0z" fill={G} stroke="none" /><Page x={52} y={6} w={44} h={84} f={20} /><path d="M48 0V96" stroke={B} /><path d="M14 28H30V44H14z" stroke="#e0433c" /><path d="M14 56H30V70H14z" stroke="#3aa335" /><path d="M64 36H80V50H64zM64 60H80V74H64z" stroke="#888" strokeWidth="4" /></>),
    t("Share", <Fill d="M96 4L0 50L28 58L80 20L36 62V94L52 72L76 84z" c={B} />),
    t("Activity", <><path d="M3 6H78V72H3z" stroke={B} /><path d="M14 44C22 22 34 24 40 40S58 56 68 36" stroke={B} strokeWidth="5" /><path d="M84 24H93V90H22V80" /></>),
    t("Markup", <><g transform="translate(6 0)"><path d="M3 12Q-2 22 8 26Q2 36 14 38Q24 46 30 36Q42 36 40 26Q48 18 38 12Q34 2 24 8Q10 2 3 12z" /><path d="M62 14V60" stroke="#f2f2f2" /><Fill d="M50 56H74L62 74z" c="#f2f2f2" /><path d="M18 50V82H88V50" stroke={B} /></g><Dot x={112} y={16} /></>),
  ],
  [
    t("Tasks", <><path d="M4 14H80V90H4z" fill={G} stroke="none" /><path d="M26 4H56V20H26z" fill="#fff" stroke={BG} /><path d="M16 34H22M30 34H60M16 52H22M30 52H60M16 70H22M30 70H50" stroke="#3d8ae0" /><Bolt x={50} y={48} /><Dot x={106} y={16} /></>),
  ],
];

/* ---------- drawing area ---------- */

const Compass = () => (
  <svg viewBox="0 0 960 780" className="absolute right-[-8px] top-[54px] h-[260px] w-80" fontFamily="Liberation Sans, sans-serif">
    <defs>
      <linearGradient id="c1"><stop stopColor="#b4b5b8" /><stop offset="1" stopColor="#a6a7aa" /></linearGradient>
      <linearGradient id="c2"><stop stopColor="#b6b7b9" /><stop offset="1" stopColor="#88898c" /></linearGradient>
      <linearGradient id="c3" x1="0" y1="1" x2="1" y2="0"><stop stopColor="#b0b1b4" /><stop offset="1" stopColor="#8f9093" /></linearGradient>
    </defs>
    <path fillRule="evenodd" d="M63 480C63 350 220 262 450 262S836 360 836 480C836 630 670 736 450 736S63 620 63 480zM158 470C158 570 290 655 450 655S738 580 738 475C738 370 610 300 450 300S158 370 158 470z" fill="#494d53" />
    <path d="M243 183L425 317L427 560L260 415z" fill="url(#c1)" />
    <path d="M425 317L661 210L646 442L427 560z" fill="url(#c2)" />
    <path d="M243 183L473 95L661 210L425 317z" fill="url(#c3)" />
    <path d="M388 290L434 271L470 290V345L427 362L391 348z" fill="#9aa1a9" />
    <path d="M243 183L425 317L661 210M425 317L427 560" fill="none" stroke="#4e5257" strokeWidth="3" strokeDasharray="9 2" />
    <g fontWeight="bold" fill="#4f535a" textAnchor="middle">
      <text transform="matrix(0.64 0.45 0.05 1.1 334 397)" fontSize="60">TOP</text>
      <text transform="matrix(0.05 -0.9 1 -0.42 566 378)" fontSize="57">RIGHT</text>
      <text transform="matrix(-0.6 -0.42 0.96 -0.42 464 183)" fontSize="62" y="4">BACK</text>
    </g>
    <g fill="#a5a6a8" textAnchor="middle" fontSize="165" stroke="#a5a6a8" strokeWidth="5">
      <text transform="matrix(0.12 -0.5 0.93 0.1 174 396)" fontSize="155">S</text>
      <text transform="matrix(-0.27 0.62 -1.05 -0.2 278 684)">E</text>
      <text transform="matrix(-0.08 0.6 -1.02 -0.18 737 503)">N</text>
    </g>
  </svg>
);

const Viewport = () => (
  <main className="relative flex-1 bg-[#212830]">
    <svg viewBox="368 236 2184 1540" className="absolute inset-0 h-full w-full" preserveAspectRatio="xMidYMid slice">
      <g fill="#63676a">
        <path d="M1192 627L1634 618L1786 855L1441 1014L1074 874z" />
        <path d="M1074 874L728 1032L882 1271L1323 1261L1441 1014z" />
        <path d="M1441 1014L1786 855L2155 998L2037 1243L1595 1253z" />
      </g>
      <g fill="none" stroke="#e6e6e6" strokeWidth="1.5">
        <path d="M1074 874L1192 627L1634 618L1786 855L2155 998L2037 1243L1595 1253L1441 1014L1323 1261L882 1271L728 1032L1074 874L1441 1014" />
        <path d="M368 1505L2552 507" />
        <path d="M1334 702V1063L1595 1253" />
        <ellipse cx="1334.5" cy="1064" rx="420" ry="213.5" transform="rotate(65.4 1334.5 1064)" />
      </g>
      <g fontFamily="Liberation Sans, sans-serif" fontSize="20" textAnchor="middle">
        <text x="1345" y="968" fill="#47803f">Y</text>
        <text x="1262" y="1073" fill="#41598c">Z</text>
        <text x="1408" y="1098" fill="#8c4a48">X</text>
      </g>
      <g strokeWidth="9" stroke="#2d4a2c">
        <path d="M1334 1062V988" /><path d="M1334 1062L1262 1098" stroke="#2f4880" /><path d="M1334 1062L1396 1107" stroke="#8c3a35" />
      </g>
      <g strokeWidth="5">
        <path d="M1334 1062V988" stroke="#3f7f38" /><path d="M1334 1064L1262 1098" stroke="#5580d6" /><path d="M1334 1062L1396 1107" stroke="#d9635b" />
      </g>
      <path d="M1330 986h8M1259 1100h6" stroke="#e8f0e8" strokeWidth="4" />
      <path d="M1881 1223V1356" stroke="#c8cfc8" strokeWidth="1.5" />
      <path d="M1797 1351L1925 1296" stroke="#4c4f9c" strokeWidth="1.5" />
      <path d="M1848 1290L1950 1363" stroke="#a05050" strokeWidth="1.5" />
      <rect x="1876" y="1308" width="11" height="11" fill="#212830" stroke="#e6e6e6" strokeWidth="1.5" />
    </svg>
    <div className="relative flex h-[46px] items-center gap-4 pl-8 font-['DejaVu_Sans',sans-serif] text-[22px] text-[#a9a9a7]">
      <span className="mr-1.5 text-lg leading-6">+</span>
      <span className="border-l-2 border-[#a9a9a7] pl-2.5 leading-7">Custom View</span>
      <span className="border-l-2 border-[#a9a9a7] pl-2.5 leading-7">X-Ray</span>
    </div>
    <Compass />
    <button className="absolute right-[91px] top-[338px] flex h-6 w-[143px] items-center justify-between rounded-lg bg-[#6b7278] px-2 font-['Liberation_Sans',sans-serif] text-[21px] text-[#282f37]">
      Unnamed
      <svg viewBox="0 0 18 10" className="h-2.5 w-[18px]"><path d="M1 1H17L9 9z" fill="#8fa3a6" stroke="#222" /></svg>
    </button>
    <svg viewBox="2230 500 322 160" className="absolute right-0 top-[264px] h-40 w-[322px]"><path d="M2230 654L2552 507" stroke="#e6e6e6" strokeWidth="1.5" /></svg>
    <section className="absolute bottom-0 left-1/2 w-[1000px] -translate-x-1/2 font-['Noto_Sans',sans-serif] text-[#b6bac0]">
      <div className="relative ml-20 bg-[#3c4453] pl-2.5 pt-2.5 text-xl leading-[30px]">
        <p>Specify point on the XY plane or &lt;accept&gt;:</p>
        <p>Command: CIRCLE</p>
        <p>Specify center point for circle or [3P/2P/Ttr (tan tan radius)]:</p>
        <p>Specify radius of circle or [Diameter] &lt;1.000&gt;:</p>
        <span className="absolute bottom-1 right-2.5 h-10 w-2 rounded-full bg-[#97999d]" />
      </div>
      <div className="flex h-[50px] items-center bg-[#3c4453] pr-5">
        <svg viewBox="0 0 50 30" className="ml-4 h-[30px] w-[50px]" fill="none" stroke="#b6bac0" strokeWidth="2"><path d="M2 6L10 11L2 16M14 22H28" /><path d="M32 9H44L38 16z" fill="#b6bac0" stroke="none" /></svg>
        <input aria-label="Command" placeholder="Type a command" className="ml-6 flex-1 bg-transparent text-[22px] italic outline-none placeholder:text-[#9a9ea6]" />
        <svg viewBox="0 0 12 8" className="mr-6 h-2 w-3"><path d="M0 0H12L6 8z" fill="#a0a3a8" /></svg>
        <svg viewBox="0 0 26 28" className="h-7 w-[26px]" fill="none" stroke={G} strokeWidth="2"><path d="M10 9H1V27H25V9H19M9 9V27" /><path d="M14.500 18V5" stroke={B} /><path d="M9 7L14.500 0L20 7z" fill={B} stroke="none" /></svg>
      </div>
    </section>
  </main>
);

/* ---------- right panel ---------- */

const Faded = ({ children }: { children: ReactNode }) => <g opacity="0.4">{children}</g>;

const ClipPage = ({ c = B }: { c?: string }) => (
  <><Fill d="M0 54H34V18H60V40H84V84H0z" /><Fill d="M66 18L84 36H66z" c="#f5f5f5" /><Clip c={c} /></>
);

const refTools: Tool[] = [
  t("Attach reference", <><ClipPage /><path d="M46 46H96V96H46z" fill="#505b6f" stroke="none" /><path d="M73 50V96M50 73H96" stroke={GR} strokeWidth="12" /></>),
  t("Edit reference", <Faded><ClipPage /><Pencil x={50} y={90} k={0.55} /></Faded>),
  t("Open reference", <Faded><Fill d="M0 54H34V21H72V45H96V93H0z" /><Fill d="M78 21L96 39H78z" /><Clip /></Faded>),
  t("Detach reference", <Faded><ClipPage /><path d="M48 56L82 92M82 56L48 92" stroke={R} strokeWidth="11" /></Faded>),
  t("Refresh", <Sync x={48} y={48} r={38} w={12} />),
  t("Change path", <Faded><Fill d="M0 0H42V48H0zM48 54H96V96H48z" /><path d="M21 48V75H48" /><Pencil x={50} y={46} k={0.55} /></Faded>),
  t("Path options", <><Fill d="M0 6H36L42 18H96V90H0z" /><path d="M18 45H78M22 69H78" stroke="#3d8ae0" strokeWidth="5" /><path d="M68 36L80 45L68 54M30 60L18 69L30 78" stroke="#3d8ae0" strokeWidth="5" /></>),
];

const ReferenceManager = () => (
  <aside className="flex w-[472px] shrink-0 flex-col border-r-2 border-[#2b313b] bg-[#3c4453] text-[#ececec]">
    <div className="flex h-[46px] border-l-2 border-[#3c4453]">
      <button aria-label="References" className="flex w-[103px] items-center justify-center"><Small><g transform="translate(3 2)"><ClipPage c={G} /></g></Small></button>
      <button aria-label="Palettes" className="flex w-[106px] items-center justify-center border-x-2 border-b-2 border-[#222730] bg-[#2f323e]">
        <Small><Fill d="M8 9H89V87H8z" /><Fill d="M8 9H89V26H8z" c="#a8a8ae" /><path d="M14 15h9v6h-9zM20 33h15v14h-15zM20 54h15v14h-15z" fill="#2f323e" stroke="none" /><path d="M41 33h15v14h-15zM62 33h15v14h-15zM41 54h15v14h-15zM62 54h15v14h-15zM20 75h57v5h-57z" fill="#75767e" stroke="none" /></Small>
      </button>
      <div className="flex-1 border-b-2 border-r-2 border-[#222730] bg-[#2f323e]" />
      <button aria-label="Collapse" className="flex w-[46px] items-center justify-center border-b-2 border-[#222730]">
        <svg viewBox="0 0 14 12" className="h-3 w-3.5" fill="none" stroke="#a0a2a6" strokeWidth="1.6"><path d="M1 1L6 6L1 11M8 1L13 6L8 11" /></svg>
      </button>
    </div>
    <header className="flex items-center justify-between pl-[21px] pr-6">
      <h2 className="text-2xl leading-[30px]">Reference Manager</h2>
      <svg viewBox="0 0 26 28" className="h-7 w-[26px]" fill="none" stroke={G} strokeWidth="2"><path d="M8 8V2H25V27H8V18M19 2V27" /><path d="M16 13H6" stroke={B} /><path d="M0 13L7 9V17z" fill={B} stroke="none" /></svg>
    </header>
    <div className="ml-8 mt-4 flex h-12 w-[410px] overflow-hidden rounded-md border-2 border-[#2e3b3c] bg-[#505b6f]">
      {refTools.map((r) => (
        <button key={r.n} aria-label={r.n} className="flex flex-1 items-center justify-center border-r-2 border-[#454f61]">{r.i}</button>
      ))}
      <button aria-label="Details" className="flex w-[54px] items-center justify-center bg-[#2f323e]">
        <Small><circle cx="48" cy="48" r="48" fill={G} stroke="none" /><circle cx="48" cy="24" r="7" fill="#555" stroke="none" /><path d="M36 42H52V74M36 74H62" stroke="#555" strokeWidth="8" /></Small>
      </button>
    </div>
    <div className="ml-[84px] mt-6 flex items-center gap-1.5 text-[22px]">
      <svg viewBox="0 0 28 32" className="h-8 w-7"><path d="M0 0H28V32H0z" fill={G} /><path d="M9 0V32M0 11H28" stroke="#777" strokeWidth="2" /><path d="M7 9H11V13H7z" fill={G} stroke="#777" /></svg>
      sólidos 1
    </div>
    <div className="ml-[30px] mt-[592px] h-2.5 w-60 rounded-full bg-[#94979c]" />
    <div className="mt-2 h-0.5 bg-[#2a303a]" />
  </aside>
);

/* ---------- status bar ---------- */

const W = "#d4d4d4";
const arrowhead = "M42 6L58 60L82 92L54 76H30L2 92L26 60z";

const statusTools: { n: string; on?: boolean; i: ReactNode }[] = [
  { n: "Grid", i: <path d="M24 3V93M48 3V93M72 3V93M3 24H93M3 48H93M3 72H93" /> },
  { n: "Snap", i: <path d="M9 15H87M9 48H87M9 81H87" strokeWidth="9" strokeDasharray="9 26" /> },
  { n: "Ortho", i: <path d="M6 0V93H96M6 66H33V93" /> },
  { n: "Polar", on: true, i: <><circle cx="44" cy="52" r="36" /><path d="M44 52H96M44 52L84 4" /></> },
  { n: "Dynamic input", i: <><path d="M21 6V50M0 28H42" /><path d="M36 58H84V84H36z" fill={W} stroke="none" /></> },
  { n: "Lineweight", i: <><path d="M2 10H90" strokeWidth="6" /><path d="M2 36H60M52 26V46" strokeWidth="8" /><path d="M2 58H90" strokeWidth="6" /><path d="M2 82H50" strokeWidth="16" /></> },
  { n: "Transparency", on: true, i: <><path d="M9 6H87V90H9z" /><path d="M20 24H76M20 46H76M20 68H76" strokeWidth="11" strokeDasharray="11 11" /><path d="M31 35H76M31 57H76M31 79H76" strokeWidth="11" strokeDasharray="11 11" /></> },
  { n: "Cycling", on: true, i: <><path d="M18 3H6V90H18M56 3H68V46" /><path d="M26 14H46V34H26z" /><circle cx="36" cy="60" r="11" /><Fill d="M54 44L86 76L72 80L80 94L72 96L64 84L54 92z" c="#fff" /></> },
  { n: "Isodraft", i: <><path d="M6 88H90M6 88L68 12" /><circle cx="38" cy="50" r="8" fill={W} stroke="none" /></> },
  { n: "Object snap", on: true, i: <><path d="M6 3H30V28H6zM38 15H90V90H12V36" /></> },
  { n: "Annotation visibility", on: true, i: <><Fill d={arrowhead} c="#fff" /><circle cx="78" cy="24" r="13" stroke="#fff" /></> },
  { n: "Autoscale", i: <><Fill d={arrowhead} c={W} /><Bolt x={56} y={6} k={0.8} c={W} /></> },
  { n: "Annotation scale", i: <Fill d={arrowhead} c={W} /> },
];

const StatusBar = () => (
  <footer className="flex h-12 items-center border-t-2 border-[#222730] bg-[#3a4350] font-['Noto_Sans',sans-serif] text-xl text-[#b4b8bd]">
    <button className="h-full w-[121px] bg-[#4d586c] pr-4 font-semibold text-[#f0f0f0]">Model</button>
    <button aria-label="New layout" className="flex h-full w-[46px] items-center justify-center border-x-2 border-[#2b313b]">
      <svg viewBox="0 0 24 24" className="h-6 w-6" stroke={G} strokeWidth="2"><path d="M12 1V23M1 12H23" /></svg>
    </button>
    <button className="h-full w-[118px] border-r-2 border-[#2b313b]">a3rd</button>
    <div className="ml-auto flex h-full items-center border-l-2 border-[#2b313b] pl-6 pr-3.5">
      <span className="mr-2 font-['Liberation_Sans',sans-serif] text-[23px]">1.996, 0.413, 0.000</span>
      <div className="flex gap-1">
        {statusTools.map((s) => (
          <button key={s.n} aria-label={s.n} className={`flex h-10 w-10 items-center justify-center ${s.on ? "bg-[#6285b5]" : ""}`}>
            <svg viewBox="0 0 96 96" className="h-8 w-8" fill="none" stroke={s.on ? "#f5f5f5" : W} strokeWidth="6">{s.i}</svg>
          </button>
        ))}
      </div>
      <button className="flex items-center gap-2 font-['Liberation_Sans',sans-serif]">
        1:1<svg viewBox="0 0 12 8" className="h-2 w-3"><path d="M0 0H12L6 8z" fill={W} /></svg>
      </button>
      <svg viewBox="0 0 34 32" className="ml-4 h-8 w-[34px]" fill="none" stroke={W} strokeWidth="2"><path d="M2 2H14V14H2zM14 20L20 31H8z" /><circle cx="26" cy="13" r="7" /></svg>
      <Gear className="ml-3 h-8 w-8 text-[#d4d4d4]" />
    </div>
  </footer>
);

/* ---------- dock ---------- */

const Svg = ({ children }: { children: ReactNode }) => (
  <svg viewBox="0 0 80 80" className="absolute inset-0 h-full w-full overflow-visible" fill="none">{children}</svg>
);

const petals = ["#f0912e", "#f3d33a", "#b7cf4b", "#69b36a", "#5c9bd6", "#7d72c2", "#b8679f", "#e4564b"];
const pads = ["#6fe04a", "#f5b82e", "#ee8b2b", "#d8332b", "#8f959c", "#ea4560", "#9a3fd6", "#3a8cf2", "#5fd0a4"];

const apps: { n: string; bg: string; run?: boolean; i: ReactNode }[] = [
  {
    n: "Finder", bg: "bg-[linear-gradient(#56c5fa,#2e6df0)]", run: true,
    i: <Svg><path d="M44 0C38 14 35 30 34 46H44C44 58 46 70 50 80H62A18 18 0 0 0 80 62V18A18 18 0 0 0 62 0z" fill="#e2e8f0" /><path d="M22 23V30M59 23V30" stroke="#1b2430" strokeWidth="3" strokeLinecap="round" /><path d="M17 54Q40 72 63 54" stroke="#1b2430" strokeWidth="3" strokeLinecap="round" /></Svg>,
  },
  { n: "Launchpad", bg: "bg-[#b9bec9]", i: <Svg>{pads.map((c, i) => <rect key={c} x={13 + (i % 3) * 20} y={13 + Math.floor(i / 3) * 20} width="15" height="15" rx="4" fill={c} />)}</Svg> },
  {
    n: "Safari", bg: "bg-[linear-gradient(#fff,#dcdcdc)]",
    i: <Svg><circle cx="40" cy="40" r="34" fill="#2f8de8" /><circle cx="40" cy="40" r="31" stroke="#fff" strokeWidth="4" strokeDasharray="1 3" opacity=".8" /><path d="M62 19L36 36L44 44z" fill="#e8453c" /><path d="M18 61L36 36L44 44z" fill="#f5f5f5" /></Svg>,
  },
  { n: "Messages", bg: "bg-[linear-gradient(#86f27f,#53b843)]", run: true, i: <Svg><path d="M40 14C22 14 11 24 11 38C11 48 17 55 26 58Q27 63 22 67Q31 66 35 61Q69 62 69 38C69 24 58 14 40 14z" fill="#f3faf2" /></Svg> },
  { n: "Mail", bg: "bg-[linear-gradient(#2d6ff0,#56c0f8)]", run: true, i: <Svg><rect x="12" y="22" width="56" height="36" rx="4" fill="#efefef" /><path d="M13 24L36 46Q40 50 44 46L67 24M13 57L32 42M67 57L48 42" stroke="#b5b5b5" strokeWidth="2" /></Svg> },
  {
    n: "Maps", bg: "bg-[#7bd46e]",
    i: <Svg><clipPath id="mp"><rect width="80" height="80" rx="18" /></clipPath><g clipPath="url(#mp)"><path d="M0 30L18 40V80H0z" fill="#e48bc0" /><path d="M0 12V32L58 80H80V62z" fill="#f5f5f5" /><path d="M44 80L58 60L74 80z" fill="#f8d44c" /><path d="M50 0Q54 26 80 30V20Q62 16 60 0z" fill="#e8e8ee" /><path d="M20 -2H40V60H20z" fill="#3478f0" stroke="#fff" strokeWidth="3" /></g><circle cx="31" cy="49" r="19" fill="#2f7bf2" stroke="#fff" strokeWidth="3" /><path d="M31 35L41 59L31 54L21 59z" fill="#fff" /></Svg>,
  },
  { n: "Photos", bg: "bg-white", i: <Svg>{petals.map((c, i) => <rect key={c} x="31" y="5" width="18" height="33" rx="9" fill={c} opacity=".85" transform={`rotate(${i * 45} 40 40)`} />)}</Svg> },
  { n: "FaceTime", bg: "bg-[linear-gradient(#86f27f,#53b843)]", i: <Svg><rect x="12" y="23" width="39" height="35" rx="9" fill="#f3faf2" /><path d="M54 35L66 25Q69 24 69 28V52Q69 57 65 55L54 46z" fill="#e3f4e0" /></Svg> },
  {
    n: "Calendar", bg: "bg-[#f6f5f4]",
    i: <span className="absolute inset-0 flex flex-col overflow-hidden rounded-[18px] text-center"><span className="h-[25px] bg-[#e2574e] text-lg font-bold leading-[27px] text-white">OUT.</span><span className="text-5xl leading-[50px] text-[#222]">9</span></span>,
  },
  { n: "Contacts", bg: "bg-[linear-gradient(#b08a4c,#9a6f3c)]", i: <Svg><circle cx="40" cy="40" r="24" stroke="#8c6630" strokeWidth="3" /><circle cx="40" cy="34" r="9" fill="#8c6630" /><path d="M23 57Q40 36 57 57Q40 70 23 57z" fill="#8c6630" /><path d="M80 12V28M80 32V44" stroke="#6fb2d8" strokeWidth="3" /><path d="M80 46V60" stroke="#e8913c" strokeWidth="3" /></Svg> },
  {
    n: "Reminders", bg: "bg-[#fbfaf9]",
    i: <Svg>{["#2f7bf2", "#e0453c", "#ee9a35"].map((c, i) => <g key={c}><circle cx="15" cy={20 + i * 20} r="4.5" fill={c} /><circle cx="15" cy={20 + i * 20} r="6.5" stroke={c} strokeWidth="1.5" /><path d={`M29 ${20 + i * 20}H72`} stroke="#bdbdc2" strokeWidth="2" /></g>)}</Svg>,
  },
  { n: "Notes", bg: "bg-[linear-gradient(#fbdc5a_0_4px,#f9cf35_20px,#c9a530_20px,#f7f6f4_22px,#e4e3df)]", run: true, i: <Svg><path d="M2 24H78" stroke="#bbb" strokeDasharray="1 2" strokeWidth="2" /><path d="M0 40H80M0 60H80" stroke="#d0d0cc" strokeWidth="2" /></Svg> },
  { n: "Freeform", bg: "bg-white", i: <Svg><circle cx="32" cy="46" r="24" fill="#f0843c" /><path d="M10 54A24 24 0 0 0 56 54z" fill="#ec5e66" /><rect x="27" y="10" width="43" height="43" rx="6" fill="#4fc4f2" opacity=".9" /><path d="M16 52Q22 28 30 28Q36 32 29 48Q40 26 46 30Q48 36 45 48Q52 34 58 34Q58 46 72 36" stroke="#123a5c" strokeWidth="4" /></Svg> },
  { n: "TV", bg: "bg-[linear-gradient(#26302c,#0c0f0f)]", i: <span className="absolute inset-0 flex items-center justify-center text-[34px] font-medium text-white"><FaApple className="h-8 w-7" />tv</span> },
  { n: "Music", bg: "bg-[linear-gradient(#f05f70,#e8353f)]", i: <Svg><path d="M33 58V22L57 16V52" stroke="#fff" strokeWidth="5" /><path d="M31 19L59 13V22L31 28z" fill="#fff" /><ellipse cx="26" cy="59" rx="9" ry="7" fill="#fff" /><ellipse cx="51" cy="53" rx="8" ry="7" fill="#fff" /></Svg> },
  { n: "Keynote", bg: "bg-[linear-gradient(#4fb6f8,#2a62ee)]", i: <Svg><path d="M20 12H60L64 34H16z" fill="#f2f4f8" /><circle cx="40" cy="21" r="7" fill="#e8a83c" /><path d="M40 21V14A7 7 0 0 1 40 28z" fill="#4a9ae0" /><path d="M40 35V66" stroke="#d8dde6" strokeWidth="3" /><path d="M27 67H53" stroke="#eef0f4" strokeWidth="3" /></Svg> },
  { n: "Numbers", bg: "bg-[linear-gradient(#84ee6c,#4ec63a)]", i: <Svg><path d="M19 68V52M33 68V38M47 68V12M61 68V26" stroke="#f3faf2" strokeWidth="10" /></Svg> },
  { n: "Pages", bg: "bg-[linear-gradient(#f6b13c,#f28a30)]", i: <Svg><path d="M66 15Q68 20 60 28L26 60L13 68L19 54L54 21Q62 13 66 15z" fill="#f8f4ee" /><path d="M37 37L43 43" stroke="#8a6a4a" strokeWidth="1.5" /><path d="M28 68H68" stroke="#fbd3a0" strokeWidth="2" /></Svg> },
  { n: "App Store", bg: "bg-[linear-gradient(#3fb2f5,#245fe0)]", i: <Svg><path d="M34 16L56 54M46 16L24 52M13 50H46M56 50H67M21 57L18 63M58 57L62 64" stroke="#fff" strokeWidth="6" strokeLinecap="round" /></Svg> },
  {
    n: "Settings", bg: "bg-[linear-gradient(#d0dae2,#908f8d)]",
    i: <><Svg><circle cx="40" cy="40" r="35" fill="#2e3133" /><circle cx="40" cy="40" r="34" stroke="#666" strokeWidth="4" strokeDasharray="2 2" /><circle cx="40" cy="40" r="28" stroke="#9a9da0" strokeWidth="5" /><circle cx="40" cy="40" r="20" fill="#55585b" stroke="#777" strokeWidth="4" /><circle cx="40" cy="40" r="7" fill="#2e3133" stroke="#a4a7ab" strokeWidth="3" /><path d="M46 40H68M37 46L26 64M37 34L26 16" stroke="#b4b7bb" strokeWidth="4" /></Svg><span className="absolute -right-3 -top-2.5 flex h-9 w-9 items-center justify-center rounded-full bg-[#e0493e] text-[22px] text-white">1</span></>,
  },
  {
    n: "AutoCAD", bg: "bg-white", run: true,
    i: <><Svg><path d="M8 16L17 8V52L8 60z" fill="#e8506c" /><path d="M17 8H64V54H17z" fill="#cf2a4c" /><path d="M64 18H70V72H14V54H64z" fill="#6a1428" /></Svg><span className="absolute inset-x-0 top-1.5 text-center text-[34px] font-bold leading-[44px] text-white">A</span><span className="absolute inset-x-0 bottom-2 text-center text-sm font-bold leading-5 text-white">CAD</span></>,
  },
  { n: "", bg: "", i: null },
  {
    n: "Chrome", bg: "bg-[#f5f5f6]", run: true,
    i: <Svg><circle cx="40" cy="40" r="33" fill="#f3c13d" /><path d="M12 23A33 33 0 0 1 68 23H40A17 17 0 0 0 25 31z" fill="#dd4b3e" /><path d="M11 24L26 49Q32 58 42 57L32 72A33 33 0 0 1 11 24z" fill="#4da152" /><circle cx="40" cy="40" r="16" fill="#fff" /><circle cx="40" cy="40" r="13" fill="#4a80ea" /></Svg>,
  },
  { n: "Word", bg: "bg-white", run: true, i: <><Svg><path d="M22 13H67V27H22z" fill="#5aa4e8" /><path d="M22 27H67V40H22z" fill="#3f7dd0" /><path d="M22 40H67V53H22z" fill="#2a5cb8" /><path d="M22 53H67V66H22z" fill="#1c3f8c" /><rect x="7" y="25" width="30" height="30" rx="3" fill="#2453b0" /></Svg><span className="absolute left-[7px] top-[25px] w-[30px] text-center text-xl font-semibold leading-[30px] text-white">W</span></> },
  { n: "WhatsApp", bg: "bg-[linear-gradient(#86f27f,#4fba45)]", run: true, i: <Svg><path d="M12 69L16 54A30 30 0 1 1 27 65z" stroke="#fff" strokeWidth="5" /><path d="M28 26Q33 22 36 30Q37 34 33 37Q38 47 46 50Q50 44 56 49Q60 52 54 57Q46 61 35 52Q22 38 28 26z" fill="#fff" /></Svg> },
  { n: "PowerPoint", bg: "bg-white", run: true, i: <><Svg><circle cx="42" cy="40" r="27" fill="#d65c3c" /><path d="M42 13A27 27 0 0 1 69 40H42z" fill="#ee9270" /><path d="M15 40A27 27 0 0 1 42 13V40z" fill="#e57350" /><rect x="11" y="25" width="30" height="30" rx="3" fill="#bb3f20" /></Svg><span className="absolute left-[11px] top-[25px] w-[30px] text-center text-xl font-semibold leading-[30px] text-white">P</span></> },
  { n: "", bg: "", i: null },
  {
    n: "Trash", bg: "",
    i: <Svg><defs><linearGradient id="tr"><stop stopColor="#5c5e60" /><stop offset=".4" stopColor="#8d8f90" /><stop offset="1" stopColor="#4c4e50" /></linearGradient></defs><path d="M6 6L14 -6L22 0L30 -8L40 -4L50 -8L60 -5L68 0L74 8L60 14H18z" fill="#dedede" /><path d="M18 2L28 12M40 -4L34 12M54 -2L62 10" stroke="#444" strokeWidth="2" /><path d="M44 2L52 10L44 12z" fill="#c05a4a" /><path d="M24 0L30 8L22 10z" fill="#4c9ac0" /><path d="M5 6Q40 22 75 6L68 76Q64 84 40 84Q16 84 12 76z" fill="url(#tr)" opacity=".95" /><path d="M5 6Q40 22 75 6" stroke="#b5b7b9" strokeWidth="2" /></Svg>,
  },
];

const Dock = () => (
  <footer className="mx-[89px] mb-2.5 mt-0.5 flex h-32 items-stretch rounded-[38px] border-2 border-[#5f6a8c] bg-[linear-gradient(90deg,#2f3f5c_0%,#2b3b50_20%,#3b4768_27%,#3b4566_40%,#4a4870_46%,#363f60_52%,#3b4468_70%,#333f5c_78%,#3d4468_88%,#3a4062_100%)] px-0.5">
    {apps.map((a, i) =>
      a.n ? (
        <button key={a.n} aria-label={a.n} className="relative flex flex-1 justify-center pt-[17px]">
          <span className={`relative h-20 w-20 rounded-[18px] ${a.bg}`}>{a.i}</span>
          {a.run && <span className="absolute bottom-1 left-1/2 h-2 w-2 -translate-x-1/2 rounded-full bg-[#b5c0dd]" />}
        </button>
      ) : (
        <span key={i} className="my-[15px] flex w-12 justify-center"><i className="w-0.5 bg-[#6f7794]" /></span>
      ),
    )}
  </footer>
);

export default function App() {
  return (
    <div className="flex min-h-screen flex-col bg-[linear-gradient(90deg,#2c3b58_0%,#22333f_10%,#27384c_25%,#4a5680_33%,#2b3a55_37%,#55588a_45%,#3a4468_52%,#1e2c38_62%,#5b5c8c_70%,#3a4468_80%,#35406a_90%,#2c3a56_97%)] font-['Inter',sans-serif]">
      <MenuBar />
      <div className="mt-0.5 flex flex-1 flex-col overflow-hidden rounded-[20px] border-t-2 border-[#9a9da3] bg-[#3c4453]">
        <div className="flex h-[50px] items-center">
          <div className="flex flex-1 gap-4">
            <span className="ml-4 flex h-6 w-6 items-center justify-center rounded-full bg-[#ed6a5f]"><i className="h-2 w-2 rounded-full bg-[#5f0f0c]" /></span>
            <span className="h-6 w-6 rounded-full bg-[#f5bf4f]" />
            <span className="h-6 w-6 rounded-full bg-[#61c554]" />
          </div>
          <h1 className="flex items-center text-[26px] font-bold text-[#a8acb3]">
            <svg viewBox="0 0 28 32" className="mr-2.5 h-8 w-7"><path d="M0 0H18V8H28V32H0z" fill="#3c5480" /><path d="M20 0L28 8H20z" fill="#6b7f9f" /><path d="M0 19H12L28 32H0z" fill="#957d45" /><path d="M9 0V16M0 11H28" stroke="#a9b4c6" strokeWidth="1.5" /><path d="M6 8H12V14H6z" fill="#3c5480" stroke="#a9b4c6" /></svg>
            Autodesk AutoCAD 2026<span className="ml-7">sólidos 1.dwg</span>
          </h1>
          <div className="flex flex-1 justify-end self-start">
            <button className="relative flex h-[42px] w-[238px] items-center whitespace-nowrap border-b-2 border-l-2 border-[#2b313b] bg-[#4d586c] pl-2.5 text-[23px] text-[#f2f2f2]">
              <svg viewBox="0 0 24 28" className="mr-3 h-7 w-6 shrink-0" fill="none" stroke="#e6e6e6" strokeWidth="2"><circle cx="12" cy="7" r="5.5" /><path d="M1.5 27Q2 16 12 16T22.5 27" /></svg>
              Carolina Gaspar
              <svg viewBox="0 0 10 8" className="absolute right-2.5 top-4 h-2 w-2.5"><path d="M0 0H10L5 8z" fill="#e6e6e6" /></svg>
            </button>
          </div>
        </div>
        <div className="flex h-[60px] items-center gap-[62px] pb-1.5 pl-[371px]">
          {toolbar.map((g, i) => (
            <div key={i} className="flex">
              {g.map((b) => <button key={b.n} aria-label={b.n} className="flex w-[66px] justify-center">{b.i}</button>)}
            </div>
          ))}
        </div>
        <div className="flex h-12 border-y-2 border-[#262c35] bg-[#3c4453] font-['Noto_Sans',sans-serif] text-[22px] text-[#a3a7ad]">
          <button aria-label="Home" className="flex w-[50px] items-center justify-center border-r-2 border-[#2b313b]">
            <svg viewBox="0 0 30 30" className="h-[30px] w-[30px]"><path d="M1 0H15V15H1z" fill="#97c6f8" /><path d="M17 2H29V15H17zM3 17H15V29H3zM17 17H29V29H17z" fill={G} /></svg>
          </button>
          <button aria-label="New tab" className="flex w-[46px] items-center justify-center border-r-2 border-[#2b313b]">
            <svg viewBox="0 0 24 24" className="h-6 w-6" stroke={G} strokeWidth="2"><path d="M12 1V23M1 12H23" /></svg>
          </button>
          <button className="w-[260px] border-r-2 border-[#2b313b] pl-2 text-left">Start</button>
          <button className="w-[258px] border-r-2 border-[#2b313b] bg-[#4d586c] pl-1.5 text-left font-medium text-[#f2f2f2]">sólidos 1*</button>
        </div>
        <div className="flex flex-1">
          <Palette />
          <div className="flex flex-1 flex-col">
            <div className="flex flex-1">
              <Viewport />
              <ReferenceManager />
            </div>
            <StatusBar />
          </div>
        </div>
      </div>
      <Dock />
    </div>
  );
}
